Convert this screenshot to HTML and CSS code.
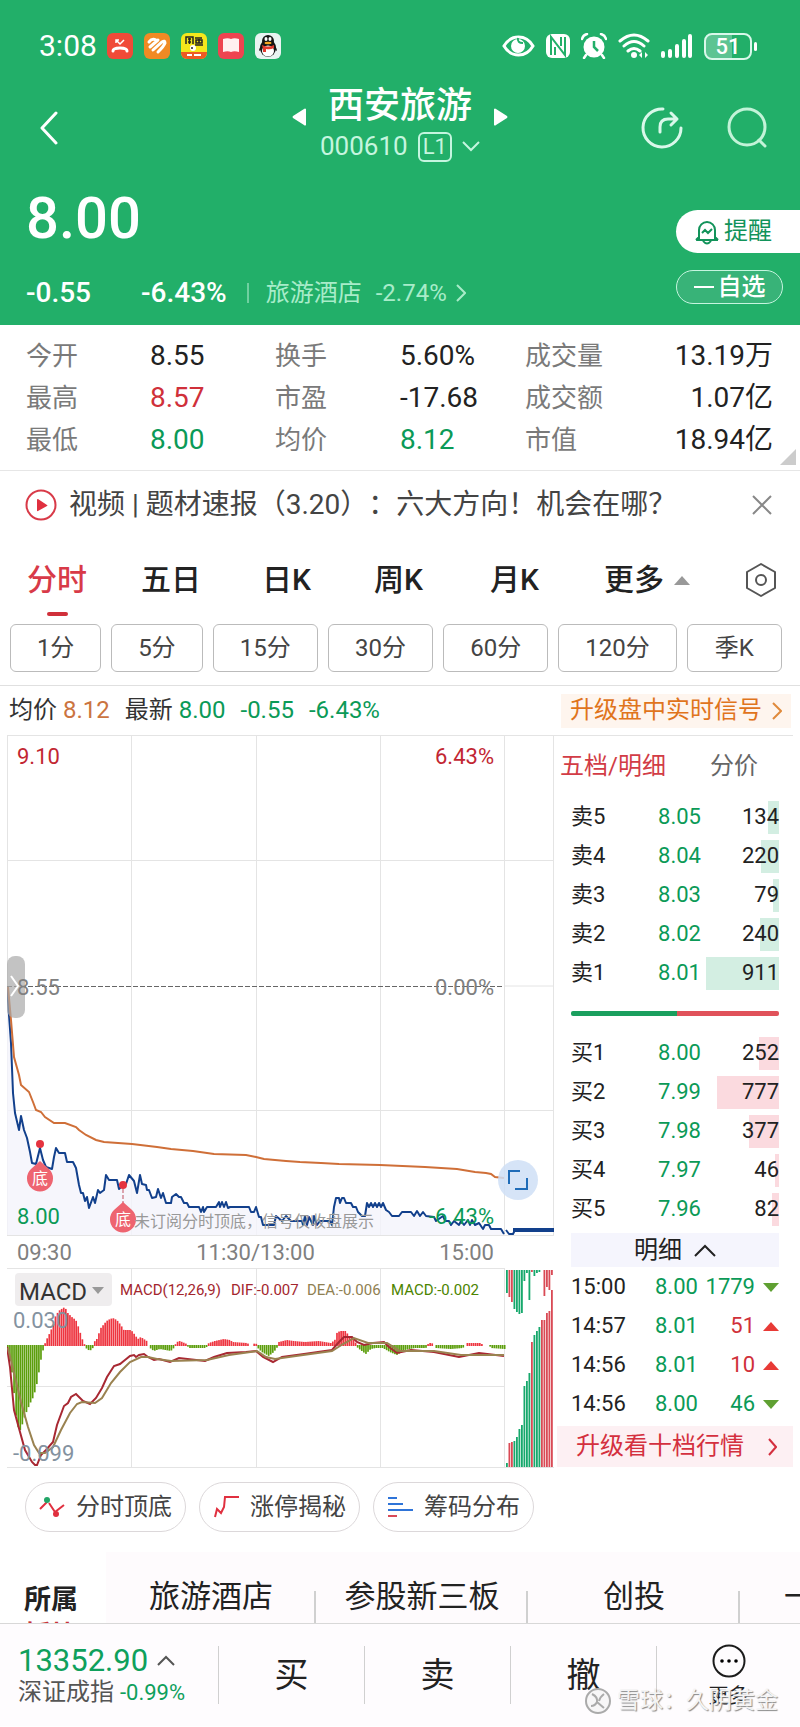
FILE: index.html
```html
<!DOCTYPE html>
<html lang="zh-CN">
<head>
    <meta charset="UTF-8">
    <meta name="viewport" content="width=device-width, initial-scale=1">
    <title>西安旅游 000610</title>
    <link rel="stylesheet" href="styles.css">
</head>
<body>
    <header class="header">
        <div class="status-bar">
            <span class="clock">3:08</span>
            <div class="app-icons">
                <svg width="26" height="26" viewBox="0 0 26 26"><rect width="26" height="26" rx="6" fill="#f04a38"/><path d="M6 18q0-3 7-3t7 3" fill="none" stroke="#fff" stroke-width="3" stroke-linecap="round"/><path d="M9 7l4 4 4-4M9 10V7h3" fill="none" stroke="#fff" stroke-width="1.500"/></svg>
                <svg width="26" height="26" viewBox="0 0 26 26"><rect width="26" height="26" rx="6" fill="#f08a24"/><path d="M5 9q3-4 7-2M6 14l8-7M9 17l9-8q3-2 3 1-1 3-7 9" fill="none" stroke="#fff" stroke-width="3" stroke-linecap="round"/></svg>
                <svg width="26" height="26" viewBox="0 0 26 26"><rect width="26" height="26" rx="6" fill="#f4e71c"/><path d="M0 19h26v1a6 6 0 0 1-6 6H6a6 6 0 0 1-6-6z" fill="#ee5a24"/><path d="M5 11V4h7v7M7 6h3M7 9h3M8.500 5v6M14 5h7M15 7h6v3h-6zM18 6v4M14 12h8" fill="none" stroke="#222" stroke-width="1.500"/><circle cx="12" cy="15" r="3" fill="#fff"/><circle cx="11" cy="15" r="1" fill="#222"/><path d="M6 22h5M13 22h7" stroke="#fff" stroke-width="2"/></svg>
                <svg width="26" height="26" viewBox="0 0 26 26"><rect width="26" height="26" rx="6" fill="#ee4450"/><path d="M5 6c3-1 6-1 8 0 2-1 5-1 8 0v13c-3-1-6-1-8 0-2-1-5-1-8 0z" fill="#fff0f0"/></svg>
                <svg width="26" height="26" viewBox="0 0 26 26"><rect width="26" height="26" rx="6" fill="#e9f4f2"/><ellipse cx="13" cy="15" rx="8" ry="9" fill="#151515"/><path d="M4 18c0-3 2-5 3-6h12c1 1 3 3 3 6l-3-2H7z" fill="#151515"/><ellipse cx="13" cy="8" rx="6" ry="6" fill="#151515"/><ellipse cx="13" cy="18" rx="6" ry="5.500" fill="#fff"/><ellipse cx="11" cy="6" rx="1.500" ry="2" fill="#fff"/><ellipse cx="15" cy="6" rx="1.500" ry="2" fill="#fff"/><ellipse cx="13" cy="10" rx="3.500" ry="1.200" fill="#f6a821"/><path d="M7 12q6 3 12 0v3q-4 2-8 1v3H8v-3z" fill="#e23a2e"/></svg>
            </div>
            <div class="system-icons">
                <svg width="33" height="24" viewBox="0 0 33 24" fill="none" stroke="#fff"><path d="M2 12C9 0 24 0 31 12 24 24 9 24 2 12z" stroke-width="3"/><circle cx="16" cy="12" r="7" fill="#fff" stroke="none"/><path d="M16 4q-1 5 5 5" stroke="#22af69" stroke-width="2"/></svg>
                <svg width="24" height="24" viewBox="0 0 24 24"><rect width="24" height="24" rx="6" fill="#fff"/><path d="M5 21V3l14 18V3M9 21V13M15 3v9" fill="none" stroke="#22af69" stroke-width="2"/></svg>
                <svg width="26" height="26" viewBox="0 0 26 26"><circle cx="13" cy="14" r="10.500" fill="#fff"/><path d="M13 8v6l4 4" fill="none" stroke="#22af69" stroke-width="2.500"/><path d="M1 6q1-4 5-5M25 6q-1-4-5-5M5 22l-2 3M21 22l2 3" fill="none" stroke="#fff" stroke-width="2.500" stroke-linecap="round"/></svg>
                <svg width="32" height="26" viewBox="0 0 32 26" fill="none" stroke="#fff" stroke-width="3" stroke-linecap="round"><path d="M2 8q14-12 28 0M6 13q10-9 20 0M10 18q6-5 12 0"/><circle cx="16" cy="22" r="3" fill="#fff" stroke="none"/><path d="M24 19v6l-3-3zM27 19v6l3-3z" fill="#fff" stroke="none"/></svg>
                <svg width="32" height="26" viewBox="0 0 32 26" stroke="#fff" stroke-width="4" stroke-linecap="round"><path d="M2 20v3M9 18v5M16 13v10M23 8v15M29 3v20"/></svg>
                <span class="battery">51</span>
            </div>
        </div>

        <nav class="nav">
            <button class="back" aria-label="返回">
                <svg width="18" height="34" viewBox="0 0 18 34" fill="none" stroke="#fff" stroke-width="3" stroke-linecap="round" stroke-linejoin="round"><path d="M16 2L2 17l14 15"/></svg>
            </button>
            <div class="stock">
                <button class="switch" aria-label="上一只"><svg width="14" height="20" viewBox="0 0 14 20"><path d="M14 2v16q-1 1-2 0L1 11q-1-1 0-2L12 2q1-1 2 0z" fill="#fff"/></svg></button>
                <div class="stock-id">
                    <h1>西安旅游</h1>
                    <div class="code">000610 <span class="level">L1</span>
                        <svg width="18" height="12" viewBox="0 0 18 12" fill="none" stroke="#c5f5df" stroke-width="2"><path d="M1 1l8 8 8-8"/></svg>
                    </div>
                </div>
                <button class="switch" aria-label="下一只"><svg width="14" height="20" viewBox="0 0 14 20"><path d="M0 2v16q1 1 2 0l11-7q1-1 0-2L2 2q-1-1-2 0z" fill="#fff"/></svg></button>
            </div>
            <div class="actions">
                <button aria-label="分享"><svg width="42" height="42" viewBox="0 0 42 42" fill="none" stroke="#d9f8ea" stroke-width="3" stroke-linecap="round" stroke-linejoin="round"><path d="M22 2A19 19 0 1 0 40 21M19 25v-5q0-8 8-8h9M30 6l6 6-6 6"/></svg></button>
                <button aria-label="搜索"><svg width="42" height="42" viewBox="0 0 42 42" fill="none" stroke="#c3f3d8" stroke-width="3" stroke-linecap="round"><circle cx="21" cy="20" r="18"/><path d="M33 33l6 6"/></svg></button>
            </div>
        </nav>

        <div class="quote">
            <div>
                <div class="price">8.00</div>
                <div class="change">
                    <span class="diff">-0.55</span>
                    <span class="percent">-6.43%</span>
                    <a href="#" class="sector">旅游酒店<span>-2.74%</span>
                        <svg width="10" height="18" viewBox="0 0 10 18" fill="none" stroke="#a8ecc9" stroke-width="2"><path d="M1 1l8 8-8 8"/></svg>
                    </a>
                </div>
            </div>
            <div class="quote-buttons">
                <button class="remind">
                    <svg width="24" height="26" viewBox="0 0 24 26" fill="none" stroke="#12935a" stroke-width="2"><path d="M4 20V11a8 8 0 0 1 16 0v9M1 21h22M4 18l-3 3M20 18l3 3M8 22q4 5 8 0M7 14l3-3 3 3 4-4"/></svg>
                    提醒
                </button>
                <button class="watch">
                    <svg width="20" height="4" viewBox="0 0 20 4"><path d="M0 2h20" stroke="#fff" stroke-width="2"/></svg>
                    自选
                </button>
            </div>
        </div>
    </header>

    <main>
        <dl class="stats">
            <dt>今开</dt><dd>8.55</dd><dt>换手</dt><dd>5.60%</dd><dt>成交量</dt><dd class="end">13.19万</dd>
            <dt>最高</dt><dd class="up">8.57</dd><dt>市盈</dt><dd>-17.68</dd><dt>成交额</dt><dd class="end">1.07亿</dd>
            <dt>最低</dt><dd class="down">8.00</dd><dt>均价</dt><dd class="down">8.12</dd><dt>市值</dt><dd class="end">18.94亿</dd>
        </dl>

        <div class="news">
            <svg width="32" height="32" viewBox="0 0 32 32"><circle cx="16" cy="16" r="14.500" fill="none" stroke="#d83a48" stroke-width="2"/><path d="M12 10.500v11q0 1 1 .5l9-5q1-1 0-1l-9-6q-1 0-1 .5z" fill="#e0303f"/></svg>
            <a href="#">视频 | 题材速报（3.20）：六大方向！机会在哪？</a>
            <button aria-label="关闭"><svg width="20" height="20" viewBox="0 0 20 20" stroke="#888" stroke-width="2"><path d="M1 1l18 18M19 1L1 19"/></svg></button>
        </div>

        <div class="tabs">
            <button class="active">分时</button>
            <button>五日</button>
            <button>日K</button>
            <button>周K</button>
            <button>月K</button>
            <button>更多<i class="tri-up gray"></i></button>
            <button aria-label="设置"><svg width="30" height="34" viewBox="0 0 30 34" fill="none" stroke="#555" stroke-width="2" stroke-linejoin="round"><path d="M15 1l14 8v16l-14 8-14-8V9z"/><circle cx="15" cy="17" r="5"/></svg></button>
        </div>

        <div class="periods">
            <button>1分</button>
            <button>5分</button>
            <button>15分</button>
            <button>30分</button>
            <button>60分</button>
            <button>120分</button>
            <button>季K</button>
        </div>

        <div class="info">
            <span>均价 <b class="avg">8.12</b></span>
            <span>最新 <b class="down">8.00</b></span>
            <b class="down">-0.55</b>
            <b class="down">-6.43%</b>
            <a href="#">升级盘中实时信号
                <svg width="10" height="18" viewBox="0 0 10 18" fill="none" stroke="#e08a3c" stroke-width="2"><path d="M1 1l8 8-8 8"/></svg>
            </a>
        </div>

        <section class="market">
            <div class="charts">
                <svg class="chart" viewBox="0 0 547 501">
                    <path class="grid-line" d="M0.500 0V500M124.500 0V500M249.500 0V500M373.500 0V500M497.500 0V500M546.500 0V500M0 .5H547M0 125.500H547M0 375.500H547M0 500.500H547M498 251H547"/>
                    <path class="mid-line" d="M0 251.500H497"/>
                    <polygon id="price-area" class="price-area"/>
                    <polyline id="price-line" class="price-line" points="0,252 4,308 6,358 8,378 12,395 14,381 17,395 20,403 23,417 25,428 29,429 33,413 36,425 39,432 45,434 47,422 49,413 52,418 58,418 60,427 66,427 69,433 72,450 74,458 76,458 78,466 80,462 82,473 86,462 88,468 91,455 93,458 97,455 99,440 102,445 110,445 112,454 116,450 119,449 122,440 127,446 130,458 133,440 135,449 139,450 140,455 142,455 145,463 149,462 151,454 154,463 156,458 159,468 164,468 165,462 169,459 172,462 174,462 177,468 180,468 182,472 192,472 194,477 196,472 197,477 200,472 209,472 212,467 213,472 215,467 217,472 219,467 221,473 223,472 242,472 244,477 247,477 249,472 252,482 254,482 256,490 267,490 269,481 275,486 279,481 284,486 295,486 296,490 298,481 300,490 302,482 306,490 307,481 310,490 313,486 323,486 325,490 327,472 329,463 332,463 333,468 335,463 337,463 339,468 344,468 346,472 349,472 351,477 355,481 358,481 360,468 362,472 364,468 366,472 368,468 370,472 372,468 374,472 376,468 379,475 382,477 385,481 392,481 395,477 404,477 407,481 410,476 413,481 416,477 419,481 427,482 429,486 436,481 438,486 442,486 444,490 447,486 452,490 454,486 457,490 461,485 463,490 465,485 468,490 472,488 476,494 478,490 482,490 484,494 494,494 497,499"/>
                    <polyline class="avg-line" points="1,252 4,285 7,322 12,340 14,350 22,357 26,367 29,375 34,377 38,382 47,388 58,388 69,392 72,395 79,400 89,405 97,407 125,409 150,412 164,414 186,416 207,419 239,420 249,422 257,424 279,426 293,427 314,428 332,429 373,430 418,432 450,434 468,437 479,438 484,439 488,442 497,443"/>
                    <path class="after-hours" d="M506 495H547"/>
                    <path d="M499 495l3 4h4l2-4" class="price-line"/>

                    <rect class="handle" y="221" width="18" height="62" rx="8"/>
                    <path d="M4 241l7 10-7 10" fill="none" stroke="#fff" stroke-width="2"/>

                    <path d="M116 454V468" class="signal-stem"/>
                    <circle cx="33" cy="409" r="4" fill="#e5333f"/>
                    <circle cx="116" cy="450" r="4" fill="#e5333f"/>
                    <path d="M33 426l9 8a13 13 0 1 1-18 0z" class="signal"/>
                    <path d="M116 467l9 8a13 13 0 1 1-18 0z" class="signal"/>
                    <text x="33" y="449" class="signal-text">底</text>
                    <text x="116" y="490" class="signal-text">底</text>
                    <text x="127" y="492" class="note">未订阅分时顶底，信号仅收盘展示</text>

                    <g class="axis-text">
                        <text x="10" y="29" class="fill-up">9.10</text>
                        <text x="487" y="29" class="fill-up right">6.43%</text>
                        <text x="10" y="260">8.55</text>
                        <text x="487" y="260" class="right">0.00%</text>
                        <text x="10" y="489" class="fill-down">8.00</text>
                        <text x="487" y="489" class="fill-down right">-6.43%</text>
                    </g>

                    <circle cx="511" cy="445" r="20" fill="#cfdff6" fill-opacity=".85"/>
                    <path d="M502 449V436H513M520 443V454H508" fill="none" stroke="#1f6cb8" stroke-width="2"/>
                </svg>

                <div class="time-axis"><span>09:30</span><span>11:30/13:00</span><span>15:00</span></div>

                <svg class="chart" viewBox="0 0 547 200">
                    <path class="grid-line" d="M0 .5H497M0 118.500H497M0 199.500H547M124.500 0V200M249.500 0V200M373.500 0V200M497.500 0V200"/>
                    <g id="macd-bars"></g>
                    <polyline class="dif-line" points="0,79 3,99 7,142 13,164 18,182 25,194 28,197 30,197 34,187 39,182 46,174 50,157 57,138 61,135 64,129 69,126 72,129 76,133 83,136 89,130 95,120 100,109 107,98 113,96 118,92 123,88 127,87 129,89 132,87 137,86 141,89 147,92 152,91 163,94 172,90 198,93 207,89 220,85 239,84 249,83 256,89 266,94 275,89 297,86 325,82 332,74 337,69 345,69 350,74 357,77 366,75 377,74 382,79 390,85 404,82 427,84 452,89 472,85 497,88"/>
                    <polyline class="dea-line" points="1,80 7,105 14,134 21,159 27,177 32,185 38,185 46,179 54,162 63,145 70,136 75,134 88,135 95,130 104,115 113,104 123,94 134,89 141,89 150,91 164,93 200,92 222,87 250,83 259,89 268,91 289,88 325,83 336,76 347,70 361,75 380,75 393,83 427,83 454,87 497,87"/>
                    <rect x="8" y="5" width="97" height="33" rx="4" fill="#efedee"/>
                    <text x="12" y="32" class="macd-name">MACD</text>
                    <path d="M85 19h12l-6 7z" fill="#999"/>
                    <g class="legend">
                        <text x="113" y="27" fill="#a3262e">MACD(12,26,9)</text>
                        <text x="224" y="27" fill="#a3262e">DIF:-0.007</text>
                        <text x="300" y="27" fill="#8f8052">DEA:-0.006</text>
                        <text x="384" y="27" fill="#4c8400">MACD:-0.002</text>
                    </g>
                    <g class="scale-text">
                        <text x="6" y="60">0.030</text>
                        <text x="6" y="193">-0.099</text>
                    </g>
                    <g id="volume-bars"></g>
                </svg>
            </div>

            <aside class="book">
                <div class="book-tabs">
                    <button class="active">五档/明细</button>
                    <button>分价</button>
                </div>
                <table class="levels sell" id="sell"></table>
                <div class="ratio"></div>
                <table class="levels buy" id="buy"></table>
                <button class="detail-toggle">明细
                    <svg width="22" height="13" viewBox="0 0 22 13" fill="none" stroke="#222" stroke-width="2"><path d="M1 12L11 2l10 10"/></svg>
                </button>
                <table class="trades">
                    <tr><td>15:00</td><td>8.00</td><td class="down">1779</td><td><i class="tri-down"></i></td></tr>
                    <tr><td>14:57</td><td>8.01</td><td class="up">51</td><td><i class="tri-up"></i></td></tr>
                    <tr><td>14:56</td><td>8.01</td><td class="up">10</td><td><i class="tri-up"></i></td></tr>
                    <tr><td>14:56</td><td>8.00</td><td class="down">46</td><td><i class="tri-down"></i></td></tr>
                </table>
                <a href="#" class="upgrade">升级看十档行情
                    <svg width="9" height="18" viewBox="0 0 9 18" fill="none" stroke="#d4303f" stroke-width="2"><path d="M1 1l7 8-7 8"/></svg>
                </a>
            </aside>
        </section>

        <div class="tools">
            <button>
                <svg width="26" height="24" viewBox="0 0 26 24" fill="none" stroke="#e0303f" stroke-width="2"><path d="M1 14l7-7M10 8l6 9 9-7"/><circle cx="8" cy="5" r="3" fill="#22a567" stroke="none"/><circle cx="17" cy="19" r="3" fill="#e0303f" stroke="none"/></svg>
                分时顶底
            </button>
            <button>
                <svg width="26" height="24" viewBox="0 0 26 24" fill="none" stroke="#e0303f" stroke-width="2"><path d="M2 22l2-8 4 4 3-6 1-10h14"/></svg>
                涨停揭秘
            </button>
            <button>
                <svg width="26" height="24" viewBox="0 0 26 24" fill="none" stroke-width="2"><path d="M1 3h9M1 9h15M1 15h25" stroke="#2f74d8"/><path d="M1 21h9" stroke="#d84a58"/></svg>
                筹码分布
            </button>
        </div>

        <div class="concepts">
            <div class="concepts-title">所属<span>板块</span></div>
            <a href="#">旅游酒店</a>
            <a href="#">参股新三板</a>
            <a href="#">创投</a>
            <a href="#" class="cut">一</a>
        </div>
    </main>

    <footer class="trade-bar">
        <div class="index">
            <div class="index-value">13352.90 <svg width="18" height="11" viewBox="0 0 18 11" fill="none" stroke="#555" stroke-width="2"><path d="M1 10l8-8 8 8"/></svg></div>
            <div class="index-name">深证成指 <span>-0.99%</span></div>
        </div>
        <button>买</button>
        <button>卖</button>
        <button>撤</button>
        <button class="more">
            <svg width="34" height="34" viewBox="0 0 34 34"><circle cx="17" cy="17" r="15.500" fill="none" stroke="#1c1c1c" stroke-width="2"/><circle cx="10" cy="17" r="1.800"/><circle cx="17" cy="17" r="1.800"/><circle cx="24" cy="17" r="1.800"/></svg>
            更多
        </button>
        <div class="watermark">
            <svg width="26" height="26" viewBox="0 0 26 26" fill="none" stroke="#aaa" stroke-width="2"><circle cx="13" cy="13" r="12" fill="#f4f4f4" fill-opacity=".7"/><path d="M7 6q6 3 5 8-2 4-6 4M19 6q-4 3-5 7M12 14l7 6"/></svg>
            雪球：久阴黄金
        </div>
    </footer>

    <script>
        const sell = [["卖5", "8.05", 134], ["卖4", "8.04", 220], ["卖3", "8.03", 79], ["卖2", "8.02", 240], ["卖1", "8.01", 911]];
        const buy = [["买1", "8.00", 252], ["买2", "7.99", 777], ["买3", "7.98", 377], ["买4", "7.97", 46], ["买5", "7.96", 82]];
        const fullVolume = 970;

        function fillLevels(id, rows) {
            document.getElementById(id).innerHTML = rows.map(([name, price, volume]) =>
                `<tr><th>${name}</th><td>${price}</td><td class="volume"><i style="width:${volume / fullVolume * 100}%"></i><span>${volume}</span></td></tr>`
            ).join('');
        }
        fillLevels('sell', sell);
        fillLevels('buy', buy);

        // shaded area under the price line
        const linePoints = document.getElementById('price-line').getAttribute('points');
        document.getElementById('price-area').setAttribute('points', linePoints + ' 497,500 0,500');

        // MACD histogram: [x, height], bars are interpolated between these
        const macd = [[0,-3],[4,-25],[7,-55],[9,-78],[12,-85],[14,-80],[17,-70],[22,-58],[26,-50],[29,-38],[32,-21],[34,-8],[36,-2],[38,4],[41,10],[45,19],[48,30],[52,35],[57,38],[60,32],[64,28],[68,25],[71,17],[74,7],[76,2],[78,-2],[82,-5],[85,-2],[87,4],[89,6],[93,17],[97,22],[100,25],[105,27],[109,25],[113,20],[116,15],[123,15],[125,13],[130,6],[133,8],[139,4],[141,-1],[146,-5],[152,-3],[163,-5],[166,-2],[169,3],[172,4],[179,1],[181,-2],[198,-2],[201,2],[207,4],[216,6],[222,5],[225,3],[239,2],[243,0],[248,2],[250,-2],[254,-6],[261,-10],[266,-6],[269,-2],[271,3],[279,5],[286,4],[297,3],[311,4],[323,2],[327,5],[329,12],[332,14],[338,14],[341,9],[345,6],[348,2],[350,-2],[354,-5],[358,-8],[363,-3],[368,-2],[375,-2],[382,-6],[389,-9],[397,-4],[407,-2],[418,-2],[421,2],[424,2],[426,0],[428,-2],[443,-3],[455,-2],[458,1],[459,2],[473,2],[475,0],[482,0],[483,-2],[497,-3]];
        const zero = 77;
        let bars = '';
        let k = 0;
        for (let x = 0; x < 497; x += 2.07) {
            while (k < macd.length - 2 && macd[k + 1][0] < x) k++;
            const [x0, h0] = macd[k];
            const [x1, h1] = macd[k + 1];
            const h = h0 + (h1 - h0) * (x - x0) / (x1 - x0);
            if (Math.abs(h) < 0.6) continue;
            bars += h > 0
                ? `<rect x="${x}" y="${zero - h}" width="1.7" height="${h + 1}" fill="#ee3540"/>`
                : `<rect x="${x}" y="${zero}" width="1.7" height="${1 - h}" fill="#5c9e0c"/>`;
        }
        document.getElementById('macd-bars').innerHTML = bars;

        // closing auction volume: [color, top bar end, bottom bar start]
        const auction = [["g",25,195],["r",29,175],["r",34,174],["g",41,173],["g",44,169],["g",46,161],["g",45,157],["g",13,118],["g",5,113],["g",32,105],["r",4,74],["g",8,67],["g",5,63],["g",4,59],["r",2,52],["r",28,52],["r",19,45],["r",22,43],["r",7,22]];
        document.getElementById('volume-bars').innerHTML = auction.map(([c, top, bottom], i) => {
            const x = 499 + i * 2.5;
            const fill = c === 'g' ? '#16a86c' : '#d94a55';
            return `<rect x="${x}" y="2" width="1.8" height="${top - 2}" fill="${fill}"/><rect x="${x}" y="${bottom}" width="1.8" height="${199 - bottom}" fill="${fill}"/>`;
        }).join('');
    </script>
</body>
</html>
```
FILE: styles.css
```css
* {
    box-sizing: border-box;
}
body {
    margin: 0;
    font-family: Roboto, "Noto Sans CJK SC", sans-serif;
    font-size: 24px;
    line-height: 1.2;
    color: #222;
    background-color: #fff;
}
button {
    border: 0;
    padding: 0;
    background: none;
    font: inherit;
    color: inherit;
    cursor: pointer;
}
a {
    color: inherit;
    text-decoration: none;
}
svg {
    flex: none;
    display: block;
}
table {
    border-collapse: collapse;
    width: 100%;
}
td, th {
    padding: 0;
    font-weight: 400;
    text-align: left;
}
.up {
    color: #d0303a;
}
.down {
    color: #0b9a57;
}

/* header */
.header {
    background-color: #22af69;
    color: #fff;
    padding-top: 32px;
}
.status-bar {
    display: flex;
    align-items: center;
    height: 28px;
    padding: 0 43px 0 39px;
}
.clock {
    font-size: 30px;
}
.app-icons {
    display: flex;
    gap: 11px;
    margin-left: 10px;
}
.system-icons {
    display: flex;
    align-items: center;
    gap: 11px;
    margin-left: auto;
}
.battery {
    position: relative;
    width: 48px;
    height: 27px;
    margin-right: 5px;
    border: 2px solid #d9f8ea;
    border-radius: 8px;
    background: linear-gradient(90deg, #5cc492 60%, #22af69 60%);
    font-size: 22px;
    font-weight: 500;
    line-height: 24px;
    text-align: center;
}
.battery::after {
    content: "";
    position: absolute;
    right: -7px;
    top: 7px;
    width: 3px;
    height: 9px;
    border-radius: 2px;
    background-color: #fff;
}
.nav {
    display: grid;
    grid-template-columns: 1fr auto 1fr;
    align-items: center;
    padding: 22px 32px 0 40px;
}
.back {
    justify-self: start;
}
.stock {
    display: flex;
    align-items: center;
    gap: 14px;
    padding: 0 8px 10px 0;
}
.stock-id {
    width: 160px;
    text-align: center;
}
.stock-id h1 {
    margin: 0;
    font-size: 36px;
    font-weight: 500;
    line-height: 48px;
    white-space: nowrap;
}
.switch {
    padding-bottom: 12px;
}
.code {
    display: flex;
    align-items: center;
    justify-content: space-between;
    height: 34px;
    font-size: 26px;
    color: #c5f5df;
}
.level {
    padding: 0 3px;
    border: 2px solid #c5f5df;
    border-radius: 6px;
    font-size: 22px;
    line-height: 26px;
}
.actions {
    display: flex;
    gap: 43px;
    justify-self: end;
}
.quote {
    display: flex;
    justify-content: space-between;
    padding: 11px 0 16px 26px;
}
.price {
    font-size: 58px;
    font-weight: 500;
    line-height: 66px;
}
.change {
    display: flex;
    align-items: center;
    height: 32px;
    margin-top: 26px;
    font-size: 28px;
    font-weight: 500;
}
.percent {
    margin-left: 50px;
}
.sector {
    display: flex;
    align-items: center;
    height: 20px;
    margin-left: 20px;
    padding-left: 17px;
    border-left: 2px solid #6fd0a0;
    font-size: 24px;
    font-weight: 400;
    color: #a8ecc9;
}
.sector span {
    margin: 0 9px 0 14px;
}
.quote-buttons {
    display: flex;
    flex-direction: column;
    gap: 17px;
    padding-top: 25px;
}
.remind {
    display: flex;
    align-items: center;
    gap: 5px;
    width: 124px;
    height: 43px;
    padding-left: 19px;
    border-radius: 22px 0 0 22px;
    background-color: #fff;
    color: #12935a;
}
.watch {
    display: flex;
    align-items: center;
    justify-content: center;
    gap: 4px;
    width: 107px;
    height: 34px;
    border: 1px solid #c5f5df;
    border-radius: 17px;
    background-color: #38b378;
    font-weight: 500;
}

/* stats */
.stats {
    position: relative;
    display: grid;
    grid-template-columns: 124fr 125fr 125fr 125fr 110fr 138fr;
    grid-auto-rows: 42px;
    align-items: center;
    margin: 0;
    padding: 10px 27px 9px 26px;
    border-bottom: 1px solid #e6e6e6;
    line-height: 42px;
}
.stats::after {
    content: "";
    position: absolute;
    right: 4px;
    bottom: 5px;
    border-left: 16px solid transparent;
    border-bottom: 16px solid #ccc;
}
.stats dt {
    font-size: 26px;
    color: #7a7a7a;
}
.stats dd {
    margin: 0;
    font-size: 28px;
    white-space: nowrap;
}
.stats .end {
    text-align: right;
}
.news {
    display: flex;
    align-items: center;
    gap: 12px;
    height: 67px;
    padding: 0 28px 0 25px;
    font-size: 28px;
    color: #444;
    white-space: nowrap;
    text-spacing-trim: space-all;
}
.news button {
    margin-left: auto;
}

/* tabs */
.tabs {
    display: grid;
    grid-template-columns: 114fr 121fr 112fr 116fr 114fr 142fr 30fr;
    align-items: start;
    justify-items: start;
    height: 86px;
    padding: 22px 24px 0 27px;
    font-size: 30px;
    line-height: 40px;
}
.tabs button {
    display: flex;
    align-items: center;
    min-height: 40px;
    font-weight: 500;
    white-space: nowrap;
}
.tabs .active {
    display: block;
    color: #d83a48;
}
.tabs .active::after {
    content: "";
    display: block;
    width: 21px;
    height: 4px;
    margin: 12px auto 0;
    border-radius: 2px;
    background-color: #d0303a;
}
.tri-up, .tri-down {
    display: inline-block;
    border: 8px solid transparent;
    border-top-width: 0;
    border-bottom: 9px solid #e83a36;
}
.tri-down {
    border-top: 9px solid #5fa032;
    border-bottom-width: 0;
}
.tri-up.gray {
    margin-left: 10px;
    border-bottom-color: #999;
}
.periods {
    display: grid;
    grid-template-columns: 91fr 91fr 105fr 105fr 105fr 118fr 95fr;
    gap: 10px;
    padding: 0 18px 13px 10px;
    border-bottom: 1px solid #e0e0e0;
}
.periods button {
    height: 48px;
    border: 1px solid #bbb;
    border-radius: 6px;
    color: #444;
}
.info {
    display: flex;
    align-items: center;
    gap: 15px;
    height: 49px;
    padding: 0 9px;
    color: #333;
    white-space: nowrap;
}
.info b {
    font-weight: 400;
}
.info .avg {
    color: #cb7440;
}
.info a {
    display: flex;
    align-items: center;
    gap: 10px;
    height: 34px;
    margin-left: auto;
    padding: 0 9px;
    background-color: #fef5ee;
    color: #e0741c;
}

/* charts */
.market {
    display: grid;
    grid-template-columns: minmax(0, 547fr) minmax(0, 239fr);
    margin: 0 7px;
}
.chart {
    width: 100%;
    height: auto;
}
.grid-line {
    fill: none;
    stroke: #e4e4e4;
}
.mid-line {
    stroke: #666;
    stroke-dasharray: 5 2;
}
.price-area {
    fill: #f4f4fb;
    fill-opacity: 0.8;
}
.price-line {
    fill: none;
    stroke: #12408c;
    stroke-width: 2;
    stroke-linejoin: round;
}
.avg-line {
    fill: none;
    stroke: #cf6f38;
    stroke-width: 2;
}
.after-hours {
    stroke: #12408c;
    stroke-width: 4;
}
.handle {
    fill: #aaa;
    fill-opacity: 0.7;
}
.signal {
    fill: #ee6470;
}
.signal-stem {
    stroke: #c05060;
    stroke-dasharray: 4 2;
}
.signal-text {
    fill: #fff;
    font-size: 16px;
    text-anchor: middle;
}
.note {
    fill: #999;
    font-size: 16px;
}
.axis-text {
    fill: #808080;
    font-size: 22px;
}
.right {
    text-anchor: end;
}
.fill-up {
    fill: #c22632;
}
.fill-down {
    fill: #0b9a57;
}
.time-axis {
    display: flex;
    justify-content: space-between;
    height: 32px;
    padding: 0 60px 0 10px;
    font-size: 22px;
    line-height: 34px;
    color: #808080;
}
.dif-line {
    fill: none;
    stroke: #a82832;
    stroke-width: 2;
}
.dea-line {
    fill: none;
    stroke: #9a8250;
    stroke-width: 2;
}
.macd-name {
    font-size: 24px;
    fill: #333;
}
.legend {
    font-size: 15px;
}
.scale-text {
    font-size: 22px;
    fill: #8492a0;
}

/* order book */
.book {
    border-top: 1px solid #e4e4e4;
    font-size: 22px;
}
.book-tabs {
    display: flex;
    gap: 44px;
    height: 62px;
    padding-left: 6px;
    font-size: 24px;
    color: #666;
}
.book-tabs button {
    height: 60px;
}
.book-tabs .active {
    color: #d23c46;
}
.levels, .trades {
    width: calc(100% - 31px);
    margin: 0 14px 0 17px;
    table-layout: fixed;
}
.levels tr, .trades tr {
    height: 39px;
}
.levels th {
    width: 65px;
}
.levels td:nth-child(2) {
    width: 65px;
    color: #0b9a57;
    text-align: right;
}
.levels .volume {
    position: relative;
    text-align: right;
}
.volume i {
    position: absolute;
    right: 0;
    top: 3px;
    height: 33px;
    background-color: #d3eee2;
}
.buy .volume i {
    background-color: #fbdadf;
}
.volume span {
    position: relative;
}
.ratio {
    height: 5px;
    margin: 18px 14px 18px 17px;
    border-radius: 2px;
    background: linear-gradient(90deg, #1a9f5e 51%, #e0525a 51%);
}
.detail-toggle {
    display: flex;
    align-items: center;
    justify-content: center;
    gap: 12px;
    width: calc(100% - 31px);
    height: 34px;
    margin: 4px 14px 1px 17px;
    background-color: #f5f5fd;
    font-size: 24px;
}
.trades td:nth-child(1) {
    width: 84px;
}
.trades td:nth-child(2) {
    width: 48px;
    color: #0b9a57;
}
.trades td:nth-child(3) {
    text-align: right;
}
.trades td:nth-child(4) {
    width: 24px;
    text-align: right;
}
.trades i {
    display: block;
    width: 0;
    margin-left: auto;
}
.upgrade {
    display: flex;
    align-items: center;
    justify-content: space-between;
    height: 41px;
    margin: 2px 0 0 3px;
    padding: 0 16px 0 19px;
    background-color: #fdf0f3;
    font-size: 24px;
    color: #d4303f;
}

/* bottom part */
.tools {
    display: flex;
    gap: 13px;
    padding: 14px 25px 20px;
}
.tools button {
    display: flex;
    align-items: center;
    justify-content: center;
    gap: 11px;
    width: 161px;
    height: 50px;
    border: 1px solid #dcd8da;
    border-radius: 25px;
    color: #444;
    white-space: nowrap;
}
.concepts {
    display: grid;
    grid-template-columns: 106fr 210fr 212fr 212fr minmax(0, 60fr);
    height: 71px;
    overflow: hidden;
    background-color: #fefbfd;
    font-size: 31px;
    line-height: 90px;
    text-align: center;
    white-space: nowrap;
}
.concepts-title {
    padding: 30px 26px 0 24px;
    background-color: #fff;
    font-size: 27px;
    font-weight: 700;
    line-height: 36px;
    text-align: left;
}
.concepts-title span {
    display: block;
    color: #c83238;
}
.concepts a {
    position: relative;
}
.concepts a:not(.cut)::after {
    content: "";
    position: absolute;
    right: 0;
    top: 39px;
    height: 40px;
    border-right: 2px solid #d0d0d0;
}
.concepts .cut {
    padding-left: 44px;
    text-align: left;
}
.trade-bar {
    position: relative;
    display: grid;
    grid-template-columns: 218fr 146fr 146fr 146fr 144fr;
    align-items: center;
    height: 103px;
    border-top: 1px solid #d8d8d8;
    background-color: #fefcfe;
}
.trade-bar button {
    height: 58px;
    border-left: 1px solid #d0d0d0;
    font-size: 34px;
}
.index {
    padding-left: 18px;
    white-space: nowrap;
}
.index-value {
    display: flex;
    align-items: center;
    gap: 9px;
    font-size: 31px;
    line-height: 34px;
    color: #0fa05c;
}
.index-name {
    line-height: 28px;
    color: #555;
}
.index-name span {
    font-size: 22px;
    color: #0fa05c;
}
.trade-bar .more {
    display: flex;
    flex-direction: column;
    align-items: center;
    gap: 3px;
    font-size: 20px;
    line-height: 30px;
}
.more svg {
    margin-top: -2px;
}
.watermark {
    position: absolute;
    right: 22px;
    bottom: 10px;
    display: flex;
    align-items: center;
    gap: 6px;
    font-size: 23px;
    line-height: 30px;
    color: #f4f4f4;
    text-shadow: 1px 1px 1px #888;
}
```
